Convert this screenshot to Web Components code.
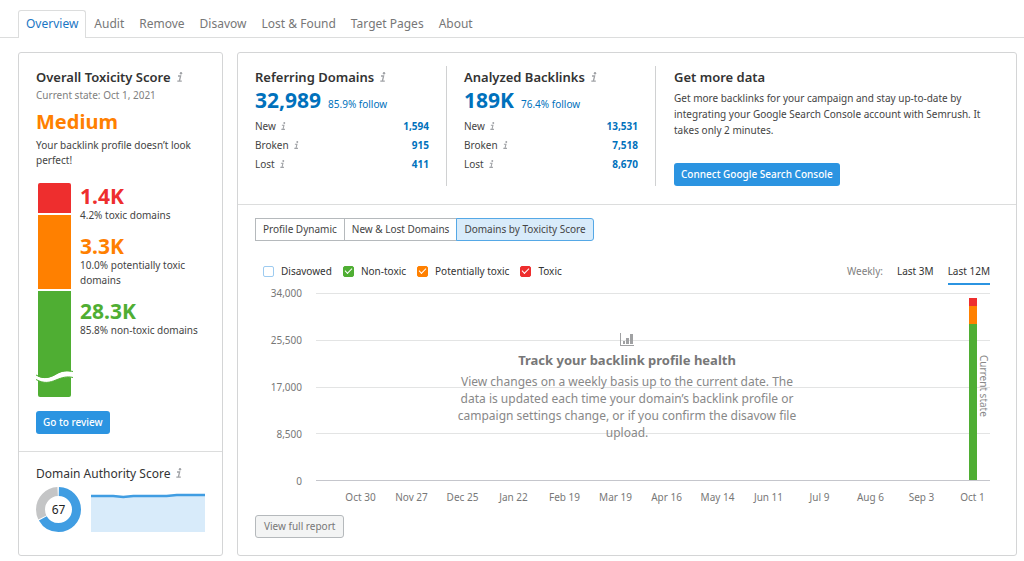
<!DOCTYPE html>
<html lang="en">
<head>
<meta charset="utf-8">
<meta name="viewport" content="width=device-width, initial-scale=1">
<title>Backlink Audit</title>
<style>
  body {
    margin: 0;
    background: #fff;
    color: #444;
    font: 10px/16px "Noto Sans", "Open Sans", sans-serif;
    --blue: #2b94e1;
    --link: #0071bc;
    --red: #ee2e2e;
    --orange: #ff8000;
    --green: #4fae33;
    --line: #dcdddd;
    --muted: #808080;
    --big: 21px;
    --title: 13px;
    --nav: 12px;
    --text: 10px;
  }
</style>
</head>
<body>
<audit-page></audit-page>

<script>
const define = (name, html, setup) => {
  const template = document.createElement('template');
  template.innerHTML = html;
  customElements.define(name, class extends HTMLElement {
    constructor() {
      super();
      this.attachShadow({ mode: 'open' }).append(template.content.cloneNode(true));
    }
    connectedCallback() {
      if (setup && !this.ready) { this.ready = true; setup(this, this.shadowRoot); }
    }
  });
};

define('info-icon', `
  <style>
    :host { display: inline-block; width: 6px; height: 10px; color: #a0a2a6; margin-left: 6px; }
    :host([small]) { width: 5px; height: 8px; margin-left: 5px; }
    svg { display: block; width: 100%; height: 100%; }
  </style>
  <svg viewBox="0 0 6 10" fill="none" stroke="currentColor" stroke-width="1.3" aria-hidden="true">
    <circle cx="4" cy="1.2" r="1.2" fill="currentColor" stroke="none"/>
    <path d="M1 4H3.6L2.4 9M.3 9.2H4.8"/>
  </svg>`);

define('action-button', `
  <style>
    :host { display: block; }
    button {
      display: block; height: 23px; padding: 0 7px; border: 0; border-radius: 3px;
      background: var(--blue); color: #fff; font: inherit; font-weight: 500; line-height: 23px; cursor: pointer;
      white-space: nowrap;
    }
    :host([plain]) button {
      border: 1px solid #b5b9bc; background: #f3f4f4; color: #777; font-weight: 400; line-height: 21px; padding: 0 8px;
    }
  </style>
  <button type="button"><slot></slot></button>`);

define('tab-bar', `
  <style>
    :host { display: block; padding: 10px 18px 0; border-bottom: 1px solid var(--line); }
    nav { display: flex; gap: 1px; margin-bottom: -1px; }
    a {
      padding: 0 6px; font-size: var(--nav); line-height: 26px; color: #777; text-decoration: none;
      border: 1px solid transparent; border-bottom: 0; border-radius: 3px 3px 0 0; white-space: nowrap;
    }
    a[aria-current] { color: #1b76c4; border-color: var(--line); background: #fff; padding: 0 7px 1px; }
  </style>
  <nav aria-label="Backlink audit">
    <a href="#overview" aria-current="page">Overview</a>
    <a href="#audit">Audit</a>
    <a href="#remove">Remove</a>
    <a href="#disavow">Disavow</a>
    <a href="#lost">Lost &amp; Found</a>
    <a href="#target">Target Pages</a>
    <a href="#about">About</a>
  </nav>`);

define('panel-card', `
  <style>
    :host { display: flex; flex-direction: column; border: 1px solid #d4d5d6; border-radius: 3px; background: #fff; min-width: 0; }
    ::slotted(:not(:first-child)) { border-top: 1px solid var(--line) !important; }
  </style>
  <slot></slot>`);

define('toxicity-bar', `
  <style>
    :host { display: grid; grid-template-rows: 30px 74px 106px; gap: 2px; position: relative; width: 33px; flex: none; margin-left: 2px; }
    span:nth-of-type(1) { background: var(--red); border-radius: 2px 2px 0 0; }
    span:nth-of-type(2) { background: var(--orange); }
    span:nth-of-type(3) { background: var(--green); border-radius: 0 0 2px 2px; }
    svg { position: absolute; left: -2px; bottom: 13px; width: 37px; height: 16px; }
  </style>
  <span></span><span></span><span></span>
  <svg viewBox="0 0 37 16" aria-hidden="true">
    <path d="M0 7.5C8 12 14 10 20 6.500S31 2.500 37 4V9.500C31 8 26 9.500 20 12S8 16 0 11.500Z" fill="#fff"/>
    <path d="M0 7C8 11.500 14 9.500 20 6S31 2 37 3.500" fill="none" stroke="#4fae33" stroke-width="1"/>
    <path d="M0 11.500C8 16 14 14.500 20 12S31 8 37 9.500" fill="none" stroke="#4fae33" stroke-width="1"/>
  </svg>`);

define('toxicity-item', `
  <style>
    :host { display: block; line-height: 15px; }
    strong { display: block; font-size: var(--big); line-height: 24px; color: var(--tone); }
  </style>
  <strong><slot name="value"></slot></strong><slot></slot>`);

define('toxicity-score', `
  <style>
    :host { display: block; padding: 16px 17px 17px; }
    h2 { margin: 0; font-size: var(--title); line-height: 16px; font-weight: 600; color: #333; white-space: nowrap; }
    .state { margin: 2px 0 5px; color: var(--muted); }
    .level { margin: 0; font-size: 20px; line-height: 28px; font-weight: 700; color: var(--orange); }
    .note { margin: 2px 0 15px; line-height: 15px; }
    .split { display: flex; gap: 9px; margin-bottom: 14px; }
    .items { display: grid; gap: 11px; align-content: start; padding-top: 1px; }
  </style>
  <h2>Overall Toxicity Score<info-icon></info-icon></h2>
  <p class="state">Current state: Oct 1, 2021</p>
  <p class="level">Medium</p>
  <p class="note">Your backlink profile doesn’t look perfect!</p>
  <div class="split">
    <toxicity-bar></toxicity-bar>
    <div class="items">
      <toxicity-item style="--tone: var(--red)"><span slot="value">1.4K</span>4.2% toxic domains</toxicity-item>
      <toxicity-item style="--tone: var(--orange)"><span slot="value">3.3K</span>10.0% potentially toxic domains</toxicity-item>
      <toxicity-item style="--tone: var(--green)"><span slot="value">28.3K</span>85.8% non-toxic domains</toxicity-item>
    </div>
  </div>
  <action-button>Go to review</action-button>`);

define('authority-score', `
  <style>
    :host { display: block; padding: 14px 17px 23px; flex: 1; }
    h2 { margin: 0 0 5px; font-size: 12px; line-height: 16px; font-weight: 400; color: #333; white-space: nowrap; }
    .row { display: flex; gap: 10px; }
    .donut { flex: none; width: 45px; height: 45px; }
    .trend { flex: 1; min-width: 0; height: 45px; }
    text { font-size: 12px; fill: #222; }
  </style>
  <h2>Domain Authority Score<info-icon></info-icon></h2>
  <div class="row">
    <svg class="donut" viewBox="0 0 45 45" role="img" aria-label="Score 67 of 100">
      <g fill="none" stroke-width="9" transform="rotate(-90 22.5 22.5)">
        <circle cx="22.500" cy="22.500" r="18" stroke="#c4c5c6" pathLength="100" stroke-dasharray="31.500 68.500" stroke-dashoffset="-67.700"/>
        <circle cx="22.500" cy="22.500" r="18" stroke="#409de2" pathLength="100" stroke-dasharray="66.500 33.500" stroke-dashoffset="-.3"/>
      </g>
      <text x="22.500" y="27" text-anchor="middle">67</text>
    </svg>
    <svg class="trend" viewBox="0 0 113 45" preserveAspectRatio="none" aria-hidden="true">
      <path d="M0 9H22L32 10L42 9H75L85 8H113V45H0Z" fill="#d8ebfa"/>
      <path d="M0 9H22L32 10L42 9H75L85 8H113" fill="none" stroke="#409de2" stroke-width="2.500"/>
    </svg>
  </div>`);

define('metric-row', `
  <style>
    :host { display: flex; justify-content: space-between; line-height: 19px; }
    a { font-weight: 700; color: var(--link); text-decoration: none; }
  </style>
  <span><slot></slot><info-icon small></info-icon></span><a href="#list"><slot name="value"></slot></a>`);

define('metric-column', `
  <style>
    :host { display: block; border-right: 1px solid #d0d1d2; padding: 3px 17px 0 0; }
    h2 { margin: 0 0 2px; font-size: var(--title); line-height: 16px; font-weight: 600; color: #333; white-space: nowrap; }
    .total { display: flex; align-items: baseline; gap: 7px; margin-bottom: 4px; line-height: 16px; }
    a { color: var(--link); text-decoration: none; }
    .total a:first-child { font-size: var(--big); line-height: 26px; font-weight: 700; }
  </style>
  <h2><slot name="title"></slot><info-icon></info-icon></h2>
  <div class="total"><a href="#all"><slot name="total"></slot></a><a href="#follow"><slot name="follow"></slot></a></div>
  <slot></slot>`);

define('more-data', `
  <style>
    :host { display: block; padding: 3px 17px 0 18px; }
    h2 { margin: 0; font-size: var(--title); line-height: 16px; font-weight: 600; color: #333; }
    p { margin: 5px 0 25px; max-width: 310px; }
  </style>
  <h2>Get more data</h2>
  <p>Get more backlinks for your campaign and stay up-to-date by integrating your Google Search Console account with Semrush. It takes only 2 minutes.</p>
  <action-button>Connect Google Search Console</action-button>`);

define('metrics-section', `
  <style>
    :host { display: grid; grid-template-columns: 192px 209px 1fr; padding: 13px 0 18px 17px; }
    metric-column + metric-column { padding-left: 17px; }
  </style>
  <metric-column>
    <span slot="title">Referring Domains</span><span slot="total">32,989</span><span slot="follow">85.9% follow</span>
    <metric-row>New<span slot="value">1,594</span></metric-row>
    <metric-row>Broken<span slot="value">915</span></metric-row>
    <metric-row>Lost<span slot="value">411</span></metric-row>
  </metric-column>
  <metric-column>
    <span slot="title">Analyzed Backlinks</span><span slot="total">189K</span><span slot="follow">76.4% follow</span>
    <metric-row>New<span slot="value">13,531</span></metric-row>
    <metric-row>Broken<span slot="value">7,518</span></metric-row>
    <metric-row>Lost<span slot="value">8,670</span></metric-row>
  </metric-column>
  <more-data></more-data>`);

define('view-switch', `
  <style>
    :host { display: flex; }
    button {
      height: 23px; padding: 0 7px; border: 1px solid #b5b9bc; margin-right: -1px; background: #fff;
      color: #444; font: inherit; line-height: 21px; white-space: nowrap; cursor: pointer;
    }
    button:first-child { border-radius: 3px 0 0 3px; }
    button:last-child { border-radius: 0 3px 3px 0; }
    button[aria-pressed="true"] { background: #d8ebfa; border-color: #55a8e6; position: relative; }
  </style>
  <button type="button" aria-pressed="false">Profile Dynamic</button>
  <button type="button" aria-pressed="false">New &amp; Lost Domains</button>
  <button type="button" aria-pressed="true">Domains by Toxicity Score</button>`);

define('series-toggle', `
  <style>
    :host { display: block; }
    label { display: flex; align-items: center; gap: 7px; white-space: nowrap; }
    input {
      appearance: none; position: relative; margin: 0; width: 11px; height: 11px; box-sizing: border-box;
      border: 1px solid #9dcbf0; border-radius: 2px; background: #fff;
    }
    input:checked { border-color: var(--tone); background: var(--tone); }
    input:checked::after {
      content: ""; position: absolute; left: 1px; top: 1px; width: 7px; height: 4px; box-sizing: border-box;
      border: solid #fff; border-width: 0 0 1px 1px; transform: rotate(-45deg);
    }
  </style>
  <label><input type="checkbox"><span><slot></slot></span></label>`,
  (host, root) => { root.querySelector('input').checked = host.hasAttribute('checked'); });

define('chart-controls', `
  <style>
    :host { display: flex; justify-content: space-between; align-items: flex-start; color: #333; }
    .series { display: flex; gap: 11px; padding-left: 8px; }
    .range { display: flex; gap: 14px; }
    .range span { color: var(--muted); }
    a { color: #333; text-decoration: none; border-bottom: 2px solid transparent; padding-bottom: 4px; }
    a[aria-current] { border-color: var(--blue); }
  </style>
  <div class="series">
    <series-toggle>Disavowed</series-toggle>
    <series-toggle checked style="--tone: var(--green)">Non-toxic</series-toggle>
    <series-toggle checked style="--tone: var(--orange)">Potentially toxic</series-toggle>
    <series-toggle checked style="--tone: var(--red)">Toxic</series-toggle>
  </div>
  <div class="range">
    <span>Weekly:</span><a href="#3m">Last 3M</a><a href="#12m" aria-current="true">Last 12M</a>
  </div>`);

define('toxicity-chart', `
  <style>
    :host { display: grid; grid-template-columns: 47px 1fr; column-gap: 14px; font-size: var(--text); color: #777; }
    .y { display: flex; flex-direction: column; justify-content: space-between; text-align: right; }
    .y span { line-height: 16px; margin: -8px 0; }
    .plot { position: relative; display: flex; flex-direction: column; justify-content: space-between; height: 188px; }
    .plot i { height: 1px; background: #e3e4e4; }
    .plot i:nth-child(5) { background: #c5c6cc; }
    .message { position: absolute; left: 0; right: 52px; top: 39px; text-align: center; }
    .message svg { display: block; margin: 0 auto 5px; }
    .message h3 { margin: 0 0 5px; font-size: var(--title); line-height: 16px; font-weight: 700; color: #777; }
    .message p { margin: 0 auto; max-width: 346px; font-size: 12px; line-height: 17px; color: #888; }
    .bar { position: absolute; right: 13px; bottom: 1px; width: 8px; height: 182px; display: grid; grid-template-rows: 8px 18px 1fr; }
    .bar b:nth-child(1) { background: var(--red); }
    .bar b:nth-child(2) { background: var(--orange); }
    .bar b:nth-child(3) { background: var(--green); }
    .now { position: absolute; right: -1px; top: 62px; writing-mode: vertical-rl; line-height: 14px; color: #888; }
    .x { grid-column: 2; display: grid; grid-template-columns: repeat(13, 1fr); margin: 8px -8px 0 19px; text-align: center; white-space: nowrap; }
  </style>
  <div class="y"><span>34,000</span><span>25,500</span><span>17,000</span><span>8,500</span><span>0</span></div>
  <div class="plot">
    <i></i><i></i><i></i><i></i><i></i>
    <div class="message">
      <svg width="14" height="15" viewBox="0 0 14 15" aria-hidden="true"><g fill="#a0a1a3"><path d="M0 1H1V13H14V14H0Z"/><path d="M3 9H5V12H3ZM6 6H9V12H6ZM10 2H13V12H10Z"/></g></svg>
      <h3>Track your backlink profile health</h3>
      <p>View changes on a weekly basis up to the current date. The data is updated each time your domain’s backlink profile or campaign settings change, or if you confirm the disavow file upload.</p>
    </div>
    <div class="bar"><b></b><b></b><b></b></div>
    <span class="now">Current state</span>
  </div>
  <div class="x"></div>`,
  (host, root) => {
    const dates = ['Oct 30', 'Nov 27', 'Dec 25', 'Jan 22', 'Feb 19', 'Mar 19', 'Apr 16', 'May 14', 'Jun 11', 'Jul 9', 'Aug 6', 'Sep 3', 'Oct 1'];
    root.querySelector('.x').append(...dates.map(date => {
      const label = document.createElement('span');
      label.textContent = date;
      return label;
    }));
  });

define('chart-section', `
  <style>
    :host { display: block; padding: 13px 26px 16px 17px; }
    chart-controls { margin: 22px 0 8px; }
    toxicity-chart { margin-bottom: 10px; }
  </style>
  <view-switch></view-switch>
  <chart-controls></chart-controls>
  <toxicity-chart></toxicity-chart>
  <action-button plain>View full report</action-button>`);

define('audit-page', `
  <style>
    :host { display: block; }
    main { display: grid; grid-template-columns: 205px 1fr; gap: 14px; padding: 14px 7px 5px 18px; }
  </style>
  <tab-bar></tab-bar>
  <main>
    <panel-card><toxicity-score></toxicity-score><authority-score></authority-score></panel-card>
    <panel-card><metrics-section></metrics-section><chart-section></chart-section></panel-card>
  </main>`);
</script>
</body>
</html>
